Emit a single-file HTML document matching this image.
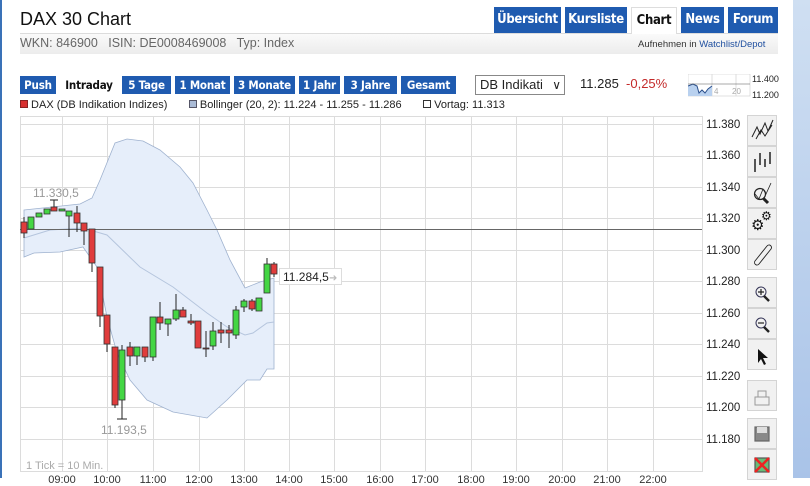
<!DOCTYPE html>
<html><head><meta charset="utf-8"><style>
*{margin:0;padding:0;box-sizing:border-box}
body{width:810px;height:478px;overflow:hidden;background:#fff;font-family:"Liberation Sans",Arial,sans-serif;position:relative}
.a{position:absolute}
.tab{position:absolute;top:7px;height:26px;background:#1f5bb0;color:#fff;font-family:"DejaVu Sans Condensed","DejaVu Sans",sans-serif;font-weight:bold;font-size:13px;line-height:26px;text-align:center;letter-spacing:-0.3px}
.btn{position:absolute;top:76px;height:18px;background:#1f5bb0;color:#fff;font-family:"DejaVu Sans Condensed","DejaVu Sans",sans-serif;font-weight:bold;font-size:11.5px;line-height:18px;text-align:center;letter-spacing:-0.2px}
.tb{position:absolute;left:747px;width:30px;height:31px;background:#f1f1f1;border:1px solid #d4d4d4}
.pl{position:absolute;left:706px;font-size:11.5px;color:#222}
.tl{position:absolute;top:474px;font-size:11px;color:#333;width:40px;text-align:center}
</style></head><body>
<div class="a" style="left:0;top:0;width:2px;height:478px;background:#3a72b8"></div>
<div class="a" style="left:793px;top:0;width:17px;height:478px;background:linear-gradient(#cfdff2,#a9c3e8)"></div>
<div class="a" style="left:20px;top:9px;font-size:18px;color:#111">DAX 30 Chart</div>
<div class="a" style="left:20px;top:33px;width:758px;height:1px;background:#dcdcdc"></div>
<div class="a" style="left:20px;top:34px;width:758px;height:20px;background:linear-gradient(#fafafa,#ececec)"></div>
<div class="a" style="left:20px;top:36px;font-size:12.5px;color:#666">WKN: 846900&nbsp;&nbsp; ISIN: DE0008469008&nbsp;&nbsp; Typ: Index</div>
<div class="a" style="left:638px;top:39px;font-size:9.5px;color:#333">Aufnehmen in <span style="color:#1f4f9f">Watchlist/Depot</span></div>
<div class="tab" style="left:494px;width:67px">Übersicht</div>
<div class="tab" style="left:565px;width:62px">Kursliste</div>
<div class="tab" style="left:631px;width:46px;background:#fff;color:#111;border:1px solid #ddd;border-bottom:none;height:27px">Chart</div>
<div class="tab" style="left:681px;width:43px">News</div>
<div class="tab" style="left:728px;width:50px">Forum</div>
<div class="btn" style="left:20px;width:36px">Push</div>
<div class="btn" style="left:60px;width:58px;background:#fff;color:#111">Intraday</div>
<div class="btn" style="left:122px;width:49px">5 Tage</div>
<div class="btn" style="left:175px;width:55px">1 Monat</div>
<div class="btn" style="left:234px;width:61px">3 Monate</div>
<div class="btn" style="left:299px;width:41px">1 Jahr</div>
<div class="btn" style="left:344px;width:53px">3 Jahre</div>
<div class="btn" style="left:401px;width:55px">Gesamt</div>
<div class="a" style="left:475px;top:75px;width:90px;height:20px;border:1px solid #888;font-size:13px;line-height:18px;padding-left:4px;color:#222">DB Indikati<span style="position:absolute;right:3px;font-size:12px">&#8744;</span></div>
<div class="a" style="left:580px;top:76px;font-size:13px;color:#222">11.285 <span style="color:#c42a2a">&nbsp;-0,25%</span></div>
<svg class="a" style="left:688px;top:74px" width="66" height="24">
<rect x="0" y="0" width="62" height="22" fill="#fff" stroke="#ccc" stroke-width="0.6"/>
<line x1="24" y1="0" x2="24" y2="22" stroke="#ddd"/><line x1="48" y1="0" x2="48" y2="22" stroke="#ddd"/>
<path d="M0 12 L5 10 L9 12 L11 19 L14 16 L17 19 L20 15 L24 12 L24 22 L0 22Z" fill="#b9d1ef"/>
<path d="M0 12 L5 10 L9 12 L11 19 L14 16 L17 19 L20 15 L24 12" fill="none" stroke="#2a4f8c" stroke-width="1"/>
<line x1="0" y1="10" x2="62" y2="10" stroke="#555" stroke-width="0.6"/>
<text x="26" y="20" font-size="8" fill="#aaa" font-family="Liberation Sans">4</text><text x="44" y="20" font-size="8" fill="#aaa" font-family="Liberation Sans">20</text>
</svg>
<div class="a" style="left:752px;top:74px;font-size:9px;color:#222">11.400</div>
<div class="a" style="left:752px;top:90px;font-size:9px;color:#222">11.200</div>
<div class="a" style="left:20px;top:99px;font-size:11px;color:#222;white-space:nowrap"><span style="display:inline-block;width:8px;height:8px;background:#d83030;border:1px solid #822"></span> DAX (DB Indikation Indizes)&nbsp;&nbsp;&nbsp;&nbsp;&nbsp;&nbsp; <span style="display:inline-block;width:8px;height:8px;background:#aabbd6;border:1px solid #556"></span> Bollinger (20, 2): 11.224 - 11.255 - 11.286&nbsp;&nbsp;&nbsp;&nbsp;&nbsp;&nbsp; <span style="display:inline-block;width:8px;height:8px;background:#fff;border:1px solid #333"></span> Vortag: 11.313</div>
<svg class="a" style="left:0;top:0" width="810" height="478">
<g stroke="#dcdcdc" stroke-width="1">
<line x1="20.5" y1="116" x2="20.5" y2="472"/><line x1="702.5" y1="116" x2="702.5" y2="472"/>
<line x1="20" y1="116.5" x2="702" y2="116.5"/><line x1="20" y1="471.5" x2="702" y2="471.5"/>
<line x1="62.5" y1="116" x2="62.5" y2="472"/><line x1="107.5" y1="116" x2="107.5" y2="472"/><line x1="153.5" y1="116" x2="153.5" y2="472"/><line x1="199.5" y1="116" x2="199.5" y2="472"/><line x1="244.5" y1="116" x2="244.5" y2="472"/><line x1="289.5" y1="116" x2="289.5" y2="472"/><line x1="334.5" y1="116" x2="334.5" y2="472"/><line x1="380.5" y1="116" x2="380.5" y2="472"/><line x1="425.5" y1="116" x2="425.5" y2="472"/><line x1="471.5" y1="116" x2="471.5" y2="472"/><line x1="516.5" y1="116" x2="516.5" y2="472"/><line x1="562.5" y1="116" x2="562.5" y2="472"/><line x1="607.5" y1="116" x2="607.5" y2="472"/><line x1="653.5" y1="116" x2="653.5" y2="472"/>
<line x1="20" y1="124.5" x2="702" y2="124.5"/><line x1="20" y1="156.5" x2="702" y2="156.5"/><line x1="20" y1="187.5" x2="702" y2="187.5"/><line x1="20" y1="218.5" x2="702" y2="218.5"/><line x1="20" y1="250.5" x2="702" y2="250.5"/><line x1="20" y1="281.5" x2="702" y2="281.5"/><line x1="20" y1="313.5" x2="702" y2="313.5"/><line x1="20" y1="344.5" x2="702" y2="344.5"/><line x1="20" y1="376.5" x2="702" y2="376.5"/><line x1="20" y1="407.5" x2="702" y2="407.5"/><line x1="20" y1="439.5" x2="702" y2="439.5"/>
</g>
<path d="M24 210 L80 204 L92 198 L100 180 L115 143 L127 139 L143 141 L160 150 L180 167 L193 183 L207 210 L217 230 L230 260 L245 288 L260 282 L274 278 L274 369 L267 369 L260 380 L247 380 L227 400 L207 418 L173 412 L147 400 L130 380 L117 353 L107 317 L97 267 L83 247 L60 252 L34 253 L24 257Z" fill="#e6eefa" stroke="#9fb2cf" stroke-width="0.8"/>
<path d="M24 238 L50 230 L83 228 L107 235 L140 267 L173 287 L207 313 L227 327 L245 335 L253 333 L267 323 L274 322" fill="none" stroke="#b5c5dd" stroke-width="1"/>
<line x1="20" y1="229.5" x2="702" y2="229.5" stroke="#666" stroke-width="1"/>
<g stroke="#222" stroke-width="1">
<line x1="24" y1="217" x2="24" y2="238"/><line x1="54" y1="200" x2="54" y2="211"/><line x1="69" y1="211" x2="69" y2="237"/><line x1="77" y1="206" x2="77" y2="232"/><line x1="84" y1="223" x2="84" y2="245"/><line x1="92" y1="229" x2="92" y2="272"/><line x1="100" y1="267" x2="100" y2="327"/><line x1="107" y1="315" x2="107" y2="352"/><line x1="115" y1="347" x2="115" y2="408"/><line x1="122" y1="345" x2="122" y2="419"/><line x1="130" y1="342" x2="130" y2="366"/><line x1="137" y1="347" x2="137" y2="365"/><line x1="145" y1="347" x2="145" y2="362"/><line x1="153" y1="317" x2="153" y2="361"/><line x1="160" y1="302" x2="160" y2="330"/><line x1="168" y1="319" x2="168" y2="336"/><line x1="176" y1="294" x2="176" y2="321"/><line x1="183" y1="307" x2="183" y2="317"/><line x1="191" y1="314" x2="191" y2="325"/><line x1="198" y1="321" x2="198" y2="348"/><line x1="206" y1="331" x2="206" y2="357"/><line x1="213" y1="322" x2="213" y2="350"/><line x1="221" y1="322" x2="221" y2="343"/><line x1="229" y1="325" x2="229" y2="348"/><line x1="236" y1="306" x2="236" y2="339"/><line x1="244" y1="299" x2="244" y2="312"/><line x1="252" y1="299" x2="252" y2="311"/><line x1="267" y1="258" x2="267" y2="293"/><line x1="274" y1="262" x2="274" y2="277"/>
<line x1="50" y1="200" x2="58" y2="200"/><line x1="117" y1="419" x2="127" y2="419"/>
</g>
<g stroke="#333" stroke-width="0.8">
<rect x="21" y="222" width="6" height="11" fill="#e03c3c"/>
<rect x="28" y="217" width="6" height="12" fill="#44d644"/>
<rect x="36" y="213" width="6" height="4" fill="#44d644"/>
<rect x="44" y="209" width="6" height="5" fill="#44d644"/>
<rect x="51" y="207" width="6" height="4" fill="#e03c3c"/>
<rect x="59" y="209" width="6" height="2" fill="#44d644"/>
<rect x="66" y="211" width="6" height="5" fill="#44d644"/>
<rect x="74" y="213" width="6" height="10" fill="#e03c3c"/>
<rect x="81" y="223" width="6" height="8" fill="#e03c3c"/>
<rect x="89" y="229" width="6" height="34" fill="#e03c3c"/>
<rect x="97" y="267" width="6" height="49" fill="#e03c3c"/>
<rect x="104" y="315" width="6" height="29" fill="#e03c3c"/>
<rect x="112" y="347" width="6" height="58" fill="#e03c3c"/>
<rect x="119" y="350" width="6" height="50" fill="#44d644"/>
<rect x="127" y="347" width="6" height="9" fill="#e03c3c"/>
<rect x="134" y="347" width="6" height="9" fill="#44d644"/>
<rect x="142" y="347" width="6" height="10" fill="#e03c3c"/>
<rect x="150" y="317" width="6" height="40" fill="#44d644"/>
<rect x="157" y="317" width="6" height="6" fill="#e03c3c"/>
<rect x="165" y="319" width="6" height="5" fill="#44d644"/>
<rect x="173" y="310" width="6" height="9" fill="#44d644"/>
<rect x="180" y="310" width="6" height="7" fill="#e03c3c"/>
<rect x="188" y="321" width="6" height="2" fill="#e03c3c"/>
<rect x="195" y="321" width="6" height="27" fill="#e03c3c"/>
<rect x="203" y="348" width="6" height="1" fill="#e03c3c"/>
<rect x="210" y="331" width="6" height="15" fill="#44d644"/>
<rect x="218" y="330" width="6" height="3" fill="#e03c3c"/>
<rect x="226" y="330" width="6" height="3" fill="#e03c3c"/>
<rect x="233" y="310" width="6" height="25" fill="#44d644"/>
<rect x="241" y="301" width="6" height="6" fill="#44d644"/>
<rect x="249" y="301" width="6" height="8" fill="#e03c3c"/>
<rect x="256" y="298" width="6" height="13" fill="#44d644"/>
<rect x="264" y="264" width="6" height="29" fill="#44d644"/>
<rect x="271" y="264" width="6" height="10" fill="#e03c3c"/>
</g>
<rect x="279.5" y="268.5" width="62" height="16" fill="#fff" stroke="#ddd"/>
<text x="283" y="281" font-size="12" fill="#222" font-family="Liberation Sans">11.284,5</text>
<text x="329" y="281" font-size="10" fill="#bbb" font-family="Liberation Sans">➜</text>
<text x="33" y="197" font-size="12" fill="#999" font-family="Liberation Sans">11.330,5</text>
<text x="101" y="434" font-size="12" fill="#999" font-family="Liberation Sans">11.193,5</text>
<text x="26" y="469" font-size="11" fill="#aaa" font-family="Liberation Sans">1 Tick = 10 Min.</text>
</svg>
<div class="pl" style="top:119px">11.380</div><div class="pl" style="top:150px">11.360</div><div class="pl" style="top:182px">11.340</div><div class="pl" style="top:213px">11.320</div><div class="pl" style="top:245px">11.300</div><div class="pl" style="top:276px">11.280</div><div class="pl" style="top:308px">11.260</div><div class="pl" style="top:339px">11.240</div><div class="pl" style="top:371px">11.220</div><div class="pl" style="top:402px">11.200</div><div class="pl" style="top:434px">11.180</div>
<div class="tl" style="left:42px">09:00</div><div class="tl" style="left:87px">10:00</div><div class="tl" style="left:133px">11:00</div><div class="tl" style="left:179px">12:00</div><div class="tl" style="left:224px">13:00</div><div class="tl" style="left:269px">14:00</div><div class="tl" style="left:314px">15:00</div><div class="tl" style="left:360px">16:00</div><div class="tl" style="left:405px">17:00</div><div class="tl" style="left:451px">18:00</div><div class="tl" style="left:496px">19:00</div><div class="tl" style="left:542px">20:00</div><div class="tl" style="left:587px">21:00</div><div class="tl" style="left:633px">22:00</div>
<div class="tb" style="top:115px"></div><div class="tb" style="top:146px"></div><div class="tb" style="top:177px"></div><div class="tb" style="top:208px"></div><div class="tb" style="top:239px"></div>
<div class="tb" style="top:277px"></div><div class="tb" style="top:308px"></div><div class="tb" style="top:339px"></div>
<div class="tb" style="top:380px"></div>
<div class="tb" style="top:418px"></div><div class="tb" style="top:449px"></div>
<div class="a" style="left:751px;top:218px;font-family:'DejaVu Sans',sans-serif;font-size:15px;color:#111;line-height:15px">&#9881;</div>
<div class="a" style="left:761px;top:210px;font-family:'DejaVu Sans',sans-serif;font-size:12px;color:#111;line-height:12px">&#9881;</div>
<svg class="a" style="left:747px;top:115px" width="30" height="363" fill="none" stroke="#222" stroke-width="1.2">
<path d="M5 22 L10 12 L13 19 L18 8 L21 16 L26 5 M9 24 L14 15 L18 21 L25 10" stroke-width="1"/>
<g stroke="#555" stroke-width="2"><line x1="8" y1="44" x2="8" y2="57"/><line x1="13" y1="38" x2="13" y2="50"/><line x1="18" y1="44" x2="18" y2="52"/><line x1="23" y1="37" x2="23" y2="49"/></g>
<circle cx="13" cy="79" r="5.5" stroke-width="1.2"/><path d="M16 83 L21 88" stroke-width="3"/><path d="M8 79 L12 84 L16 74 L19 79 L24 68" stroke-width="0.8"/>
<path d="M8 146 L20 131 a2.5 2.5 0 0 1 4 3 L12 149 a2.5 2.5 0 0 1 -4 -3Z" stroke-width="0.9"/>
<circle cx="14" cy="177" r="5" stroke="#335" stroke-width="1"/><path d="M11 177 H17 M14 174 V180 M17 181 L22 186"/><path d="M17 181 L22 186" stroke-width="2.4"/>
<circle cx="14" cy="208" r="5" stroke="#335" stroke-width="1"/><path d="M11 208 H17"/><path d="M17 212 L22 217" stroke-width="2.4"/>
<path d="M11 234 L11 248 L14 244 L17 250 L19 249 L16 243 L21 243Z" fill="#111" stroke="none"/>
<path d="M8 282 H22 V290 H8Z M11 282 V276 H19 V282" stroke="#999" stroke-width="1"/>
<rect x="8" y="312" width="14" height="14" fill="#888" stroke="#666"/><rect x="10" y="312" width="10" height="6" fill="#ddd" stroke="none"/>
<rect x="8" y="343" width="14" height="14" fill="#6b7" stroke="#555"/><path d="M8 343 L22 357 M22 343 L8 357" stroke="#e22" stroke-width="2.5"/>
</svg>
</body></html>
